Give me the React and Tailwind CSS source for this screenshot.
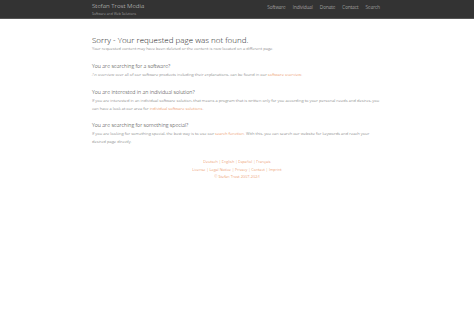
export default function App() {
  const font = { fontFamily: '"Open Sans", "Noto Sans", sans-serif' };
  return (
    <div className="min-h-[311px] w-[474px] bg-white text-[#333]" style={font}>
      <header className="h-[19px] bg-[#333333] border-b border-[#555]">
        <div className="w-[290px] mx-auto flex justify-between pt-[2px]">
          <div className="leading-none">
            <div className="text-[6.2px] font-light text-[#dcdcdc] leading-[8px]">Stefan Trost Media</div>
            <div className="text-[3.5px] font-light text-[#bbbbbb] leading-[5px] mt-[1px]">Software and Web Solutions</div>
          </div>
          <nav className="flex gap-[7px] text-[4.7px] font-light text-[#d4d4d4] pt-[2px] pr-[2px]">
            <span>Software</span>
            <span>Individual</span>
            <span>Donate</span>
            <span>Contact</span>
            <span>Search</span>
          </nav>
        </div>
      </header>

      <main className="w-[290px] mx-auto pt-[15px]">
        <h1 className="text-[8px] font-light leading-[11px] text-[#222]">Sorry - Your requested page was not found.</h1>
        <p className="text-[4.15px] font-light leading-[6px] text-[#666] mt-[1px]">
          Your requested content may have been deleted or the content is now located on a different page.
        </p>

        <h2 className="text-[5.25px] font-light leading-[9px] text-[#222] mt-[10px]">You are searching for a software?</h2>
        <p className="text-[4.15px] font-light leading-[8px] text-[#666]">
          An overview over all of our software products including their explanations, can be found in our{' '}
          <span className="text-[#e8793a]">software overview</span>.
        </p>

        <h2 className="text-[5.25px] font-light leading-[9px] text-[#222] mt-[9px]">You are interested in an individual solution?</h2>
        <p className="text-[4.15px] font-light leading-[8px] text-[#666]">
          If you are interested in an individual software solution, that means a program that is written only for you according to your personal needs and desires, you can have a look at our area for{' '}
          <span className="text-[#e8793a]">individual software solutions</span>.
        </p>

        <h2 className="text-[5.25px] font-light leading-[9px] text-[#222] mt-[8px]">You are searching for something special?</h2>
        <p className="text-[4.15px] font-light leading-[8px] text-[#666]">
          If you are looking for something special, the best way is to use our{' '}
          <span className="text-[#e8793a]">search function</span>. With this, you can search our website for keywords and reach your desired page directly.
        </p>

        <footer className="text-center text-[3.9px] font-light leading-[7.5px] text-[#e8793a] mt-[12px]">
          <div>Deutsch | English | Español | Français</div>
          <div>License | Legal Notice | Privacy | Contact | Imprint</div>
          <div>© Stefan Trost 2007-2024</div>
        </footer>
      </main>
    </div>
  );
}
